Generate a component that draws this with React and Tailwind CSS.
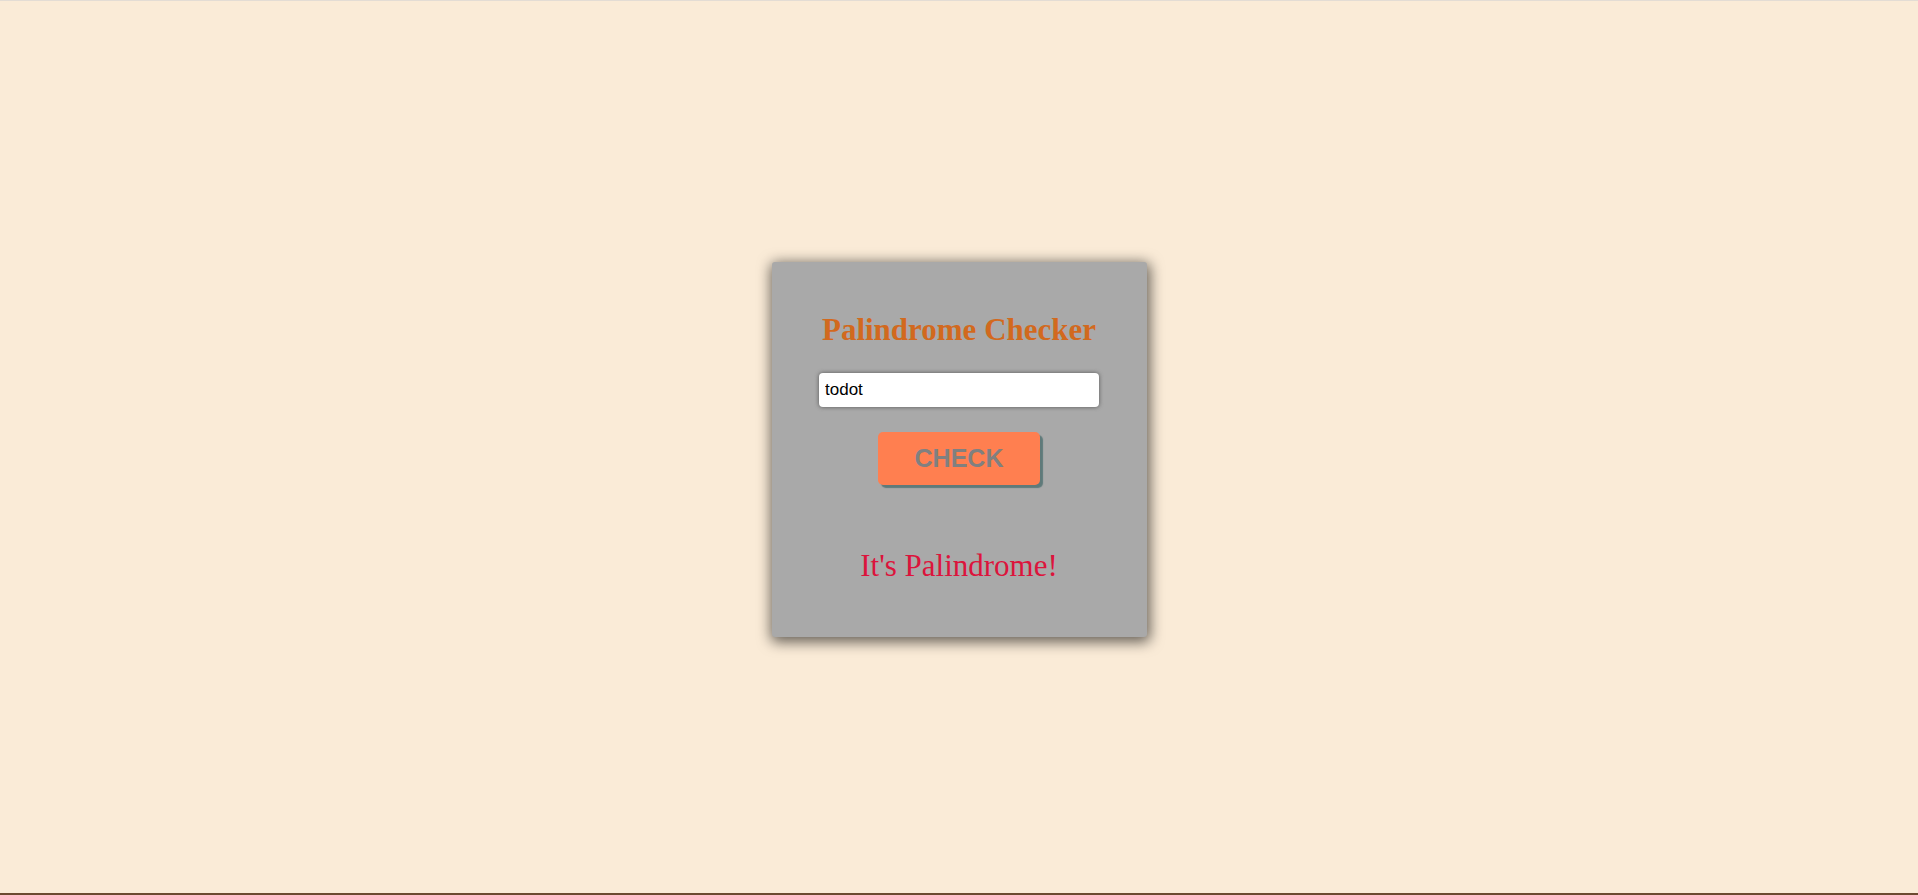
import React, { useState } from 'react';

const App = () => {
  const [text, setText] = useState('todot');
  const [result, setResult] = useState("It's Palindrome!");

  const checkPalindrome = () => {
    const clean = text.toLowerCase().replace(/[^a-z0-9]/g, '');
    const reversed = clean.split('').reverse().join('');
    setResult(clean && clean === reversed ? "It's Palindrome!" : "It's not Palindrome!");
  };

  return (
    <div className="h-[895px] bg-[#faebd7] flex flex-col">
      <div className="h-px bg-[#e3dcd4]"></div>
      <div className="flex-1 flex items-center justify-center pt-[5px]">
        <div className="w-[375px] h-[375px] bg-[#a9a9a9] rounded-[3px] shadow-[1px_3px_14px_2px_rgba(0,0,0,0.6)] flex flex-col items-center pt-[51px]">
          <h1 className="font-['Liberation_Serif',serif] font-bold text-[31px] leading-[34px] text-[#d2691e]">
            Palindrome Checker
          </h1>
          <input
            type="text"
            value={text}
            onChange={(e) => setText(e.target.value)}
            className="mt-[26px] w-[280px] h-[34px] bg-white rounded-[4px] px-[6px] font-['Liberation_Sans',sans-serif] text-[17px] text-black outline-none shadow-[0_0_4px_#555]"
          />
          <button
            type="button"
            onClick={checkPalindrome}
            className="mt-[25px] w-[162px] h-[53px] bg-[#ff7f50] rounded-[5px] font-['Liberation_Sans',sans-serif] font-bold text-[25px] text-[#808080] shadow-[3px_3px_1px_#5f7a7a]"
          >
            CHECK
          </button>
          <p className="mt-[64px] font-['Liberation_Serif',serif] text-[31px] leading-[34px] text-[#dc143c]">
            {result}
          </p>
        </div>
      </div>
      <div className="h-[2px] bg-[#6b4a30]"></div>
    </div>
  );
};

export default App;
